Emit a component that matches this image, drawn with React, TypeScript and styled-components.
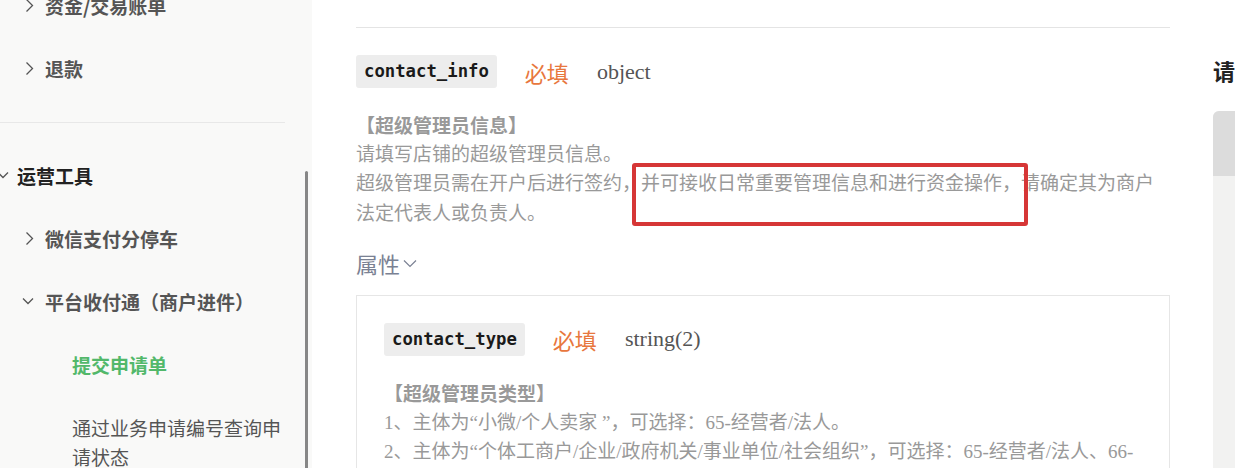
import * as React from 'react';
import styled, { createGlobalStyle } from 'styled-components';

const GlobalStyle = createGlobalStyle`
  html, body {
    margin: 0;
    padding: 0;
    background: #fff;
  }
  body {
    overflow: hidden;
  }
`;

const Page = styled.div`
  display: flex;
  width: 1235px;
  height: 468px;
  overflow: hidden;
  background: #fff;
`;

/* ---------- sidebar ---------- */

const Sidebar = styled.nav`
  position: relative;
  flex: 0 0 312px;
  background: #f9f9f8;
  overflow: hidden;
  font-family: "Noto Sans CJK SC", sans-serif;
`;

const NavList = styled.div`
  margin-top: -26.5px;
  padding-right: 27px;
`;

type Tone = 'group' | 'item' | 'active' | 'plain';

const toneColor: Record<Tone, string> = {
  group: '#222',
  item: '#555',
  active: '#52b86a',
  plain: '#555'
};

const NavRow = styled.div<{ $indent: number; $gap: number; $tone: Tone }>`
  display: flex;
  align-items: flex-start;
  gap: ${p => p.$gap}px;
  margin-left: ${p => p.$indent}px;
  padding: 17px 0;
  font-size: 19px;
  line-height: 29px;
  font-weight: ${p => (p.$tone === 'plain' ? 400 : 700)};
  color: ${p => toneColor[p.$tone]};
`;

const NavDivider = styled.div`
  height: 1px;
  margin: 22px 0 21px;
  background: #e8e8e8;
`;

const Thumb = styled.div`
  position: absolute;
  right: 4px;
  top: 171px;
  bottom: 0;
  width: 3px;
  border-radius: 2px 2px 0 0;
  background: #878787;
`;

const Chevron = ({ open }: { open?: boolean }) => (
  <svg width="14" height="29" viewBox="0 0 14 29" style={{ flex: '0 0 14px' }}>
    <path
      d={open ? 'M1 11.5 L6 16.5 L11 11.5' : 'M4.5 8.5 L10.5 14.5 L4.5 20.5'}
      fill="none"
      stroke="#555"
      strokeWidth="1.3"
    />
  </svg>
);

/* ---------- main column ---------- */

const Main = styled.main`
  flex: 0 0 814px;
  margin-left: 44px;
  font-family: "Liberation Serif", "Noto Sans CJK SC", serif;
`;

const PrevSection = styled.div`
  height: 27px;
  border-bottom: 1px solid #e4e4e4;
`;

const Field = styled.section`
  padding-top: 27px;
`;

const FieldHead = styled.div`
  display: flex;
  align-items: center;
  gap: 28px;
  height: 33px;
`;

const Name = styled.code`
  display: inline-block;
  height: 33px;
  padding: 0 8px;
  line-height: 33px;
  border-radius: 3px;
  background: #ededed;
  font-family: "DejaVu Sans Mono", monospace;
  font-size: 17.3px;
  font-weight: 700;
  color: #1a1a1a;
`;

const Required = styled.span`
  font-family: "Noto Sans CJK SC", sans-serif;
  font-size: 22px;
  color: #e8773d;
`;

const TypeName = styled.span`
  font-size: 22px;
  color: #555;
`;

const Desc = styled.div`
  position: relative;
  margin-top: 22px;
  font-size: 19px;
  line-height: 29.7px;
  color: #999;
`;

const DescTitle = styled.div`
  font-family: "Noto Sans CJK SC", sans-serif;
  font-weight: 700;
`;

const Mark = styled.div`
  position: absolute;
  top: 53px;
  left: 276px;
  width: 396px;
  height: 63px;
  box-sizing: border-box;
  border: 4px solid #d63636;
  border-radius: 3px;
  pointer-events: none;
`;

const Toggle = styled.div`
  display: flex;
  align-items: center;
  gap: 2px;
  margin-top: 19px;
  font-family: "Noto Sans CJK SC", sans-serif;
  font-size: 22px;
  line-height: 30px;
  color: #7a8193;
`;

const Props = styled.div`
  margin-top: 17px;
  padding: 0 27px 0;
  border: 1px solid #e6e6e6;
  height: 400px;
`;

/* ---------- right column ---------- */

const Aside = styled.aside`
  display: flex;
  flex-direction: column;
  flex: 0 0 400px;
  margin-left: 43px;
  padding-top: 55px;
  font-family: "Noto Sans CJK SC", sans-serif;
`;

const AsideTitle = styled.h3`
  margin: 0;
  font-size: 22px;
  line-height: 30px;
  font-weight: 700;
  color: #222;
`;

const CodeBlock = styled.div`
  display: flex;
  flex-direction: column;
  flex: 1;
  margin-top: 26px;
  border-top-left-radius: 6px;
  overflow: hidden;
  background: #f2f2f1;
`;

const CodeHead = styled.div`
  height: 65px;
  background: #dcdcdc;
`;

export default function App() {
  return (
    <>
      <GlobalStyle />
      <Page>
        <Sidebar>
          <NavList>
            <NavRow $indent={22} $gap={9} $tone="item">
              <Chevron />
              资金/交易账单
            </NavRow>
            <NavRow $indent={22} $gap={9} $tone="item">
              <Chevron />
              退款
            </NavRow>
            <NavDivider />
            <NavRow $indent={-3} $gap={6} $tone="group">
              <Chevron open />
              运营工具
            </NavRow>
            <NavRow $indent={22} $gap={9} $tone="item">
              <Chevron />
              微信支付分停车
            </NavRow>
            <NavRow $indent={22} $gap={9} $tone="item">
              <Chevron open />
              平台收付通（商户进件）
            </NavRow>
            <NavRow $indent={72} $gap={0} $tone="active">
              提交申请单
            </NavRow>
            <NavRow $indent={72} $gap={0} $tone="plain">
              通过业务申请编号查询申请状态
            </NavRow>
          </NavList>
          <Thumb />
        </Sidebar>

        <Main>
          <PrevSection />
          <Field>
            <FieldHead>
              <Name>contact_info</Name>
              <Required>必填</Required>
              <TypeName>object</TypeName>
            </FieldHead>
            <Desc>
              <DescTitle>【超级管理员信息】</DescTitle>
              <div>请填写店铺的超级管理员信息。</div>
              <div>
                超级管理员需在开户后进行签约，并可接收日常重要管理信息和进行资金操作，请确定其为商户法定代表人或负责人。
              </div>
              <Mark />
            </Desc>
            <Toggle>
              属性
              <svg width="16" height="16" viewBox="0 0 16 16">
                <path d="M2 5.5 L8 11.5 L14 5.5" fill="none" stroke="#7a8193" strokeWidth="1.2" />
              </svg>
            </Toggle>
            <Props>
              <Field>
                <FieldHead>
                  <Name>contact_type</Name>
                  <Required>必填</Required>
                  <TypeName>string(2)</TypeName>
                </FieldHead>
                <Desc>
                  <DescTitle>【超级管理员类型】</DescTitle>
                  <div>1、主体为“小微/个人卖家 ”，可选择：65-经营者/法人。</div>
                  <div>
                    2、主体为“个体工商户/企业/政府机关/事业单位/社会组织”，可选择：65-经营者/法人、66-负责人。
                  </div>
                </Desc>
              </Field>
            </Props>
          </Field>
        </Main>

        <Aside>
          <AsideTitle>请求示例</AsideTitle>
          <CodeBlock>
            <CodeHead />
          </CodeBlock>
        </Aside>
      </Page>
    </>
  );
}
